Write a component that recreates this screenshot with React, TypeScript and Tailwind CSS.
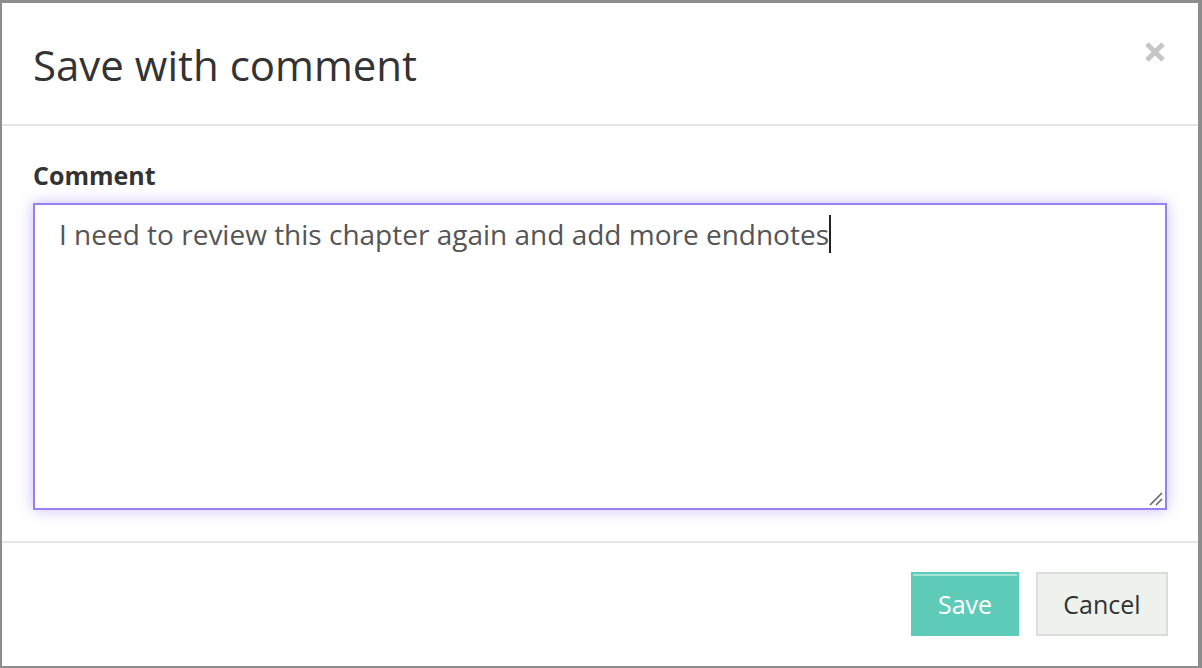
import React from "react";

export default function App() {
  return (
    <div
      className="w-[1202px] h-[668px] bg-[#8d8d8d] overflow-hidden pt-[3px] pl-[2px]"
      style={{ fontFamily: '"Open Sans", "Noto Sans", sans-serif' }}
    >
      <div className="w-[1196px] h-[663px] bg-white flex flex-col">
        {/* Header */}
        <div className="h-[123px] shrink-0 flex items-start justify-between pl-[31px] pr-[32px] border-b-2 border-[#e5e5e5]">
          <h1 className="mt-[34px] text-[42px] leading-[56px] text-[#333333] font-normal">
            Save with comment
          </h1>
          <svg width="22" height="22" viewBox="0 0 22 22" className="mt-[38px]">
            <path d="M3 3 L19 19 M19 3 L3 19" stroke="#c6c6c6" strokeWidth="5" strokeLinecap="butt" />
          </svg>
        </div>
        {/* Body */}
        <div className="h-[417px] shrink-0 border-b-2 border-[#e5e5e5] pl-[31px] pr-[29px] pt-[32px]">
          <label className="block text-[25px] leading-[34px] font-bold text-[#333333]">Comment</label>
          <div className="relative mt-[11px] w-[1134px] h-[307px] border-2 border-[#9a7ff0] shadow-[0_0_14px_rgba(140,110,240,0.45)] bg-white pl-[24px] pt-[10px]">
            <div className="flex items-center text-[28px] leading-[38px] text-[#555555] whitespace-nowrap">
              <span>I need to review this chapter again and add more endnotes</span>
              <span className="inline-block w-[2px] h-[38px] bg-[#222]" />
            </div>
            <svg width="16" height="16" viewBox="0 0 16 16" className="absolute right-[2px] bottom-[2px]">
              <path d="M15 3 L3 15 M15 9 L9 15" stroke="#666" strokeWidth="1.6" />
            </svg>
          </div>
        </div>
        {/* Footer */}
        <div className="flex-1 flex items-start justify-end gap-[17px] pr-[30px] pt-[29px]">
          <button className="relative w-[108px] h-[64px] bg-[#5ecbb9] text-white text-[25px] leading-[34px] flex items-center justify-center">
            <span className="absolute left-[2px] right-[2px] top-[2px] h-[2px] bg-[#a6e3d8]" />
            Save
          </button>
          <button className="w-[132px] h-[64px] bg-[#eef2ec] border-2 border-[#dcdcdc] text-[#333333] text-[25px] leading-[34px] flex items-center justify-center">
            Cancel
          </button>
        </div>
      </div>
    </div>
  );
}
